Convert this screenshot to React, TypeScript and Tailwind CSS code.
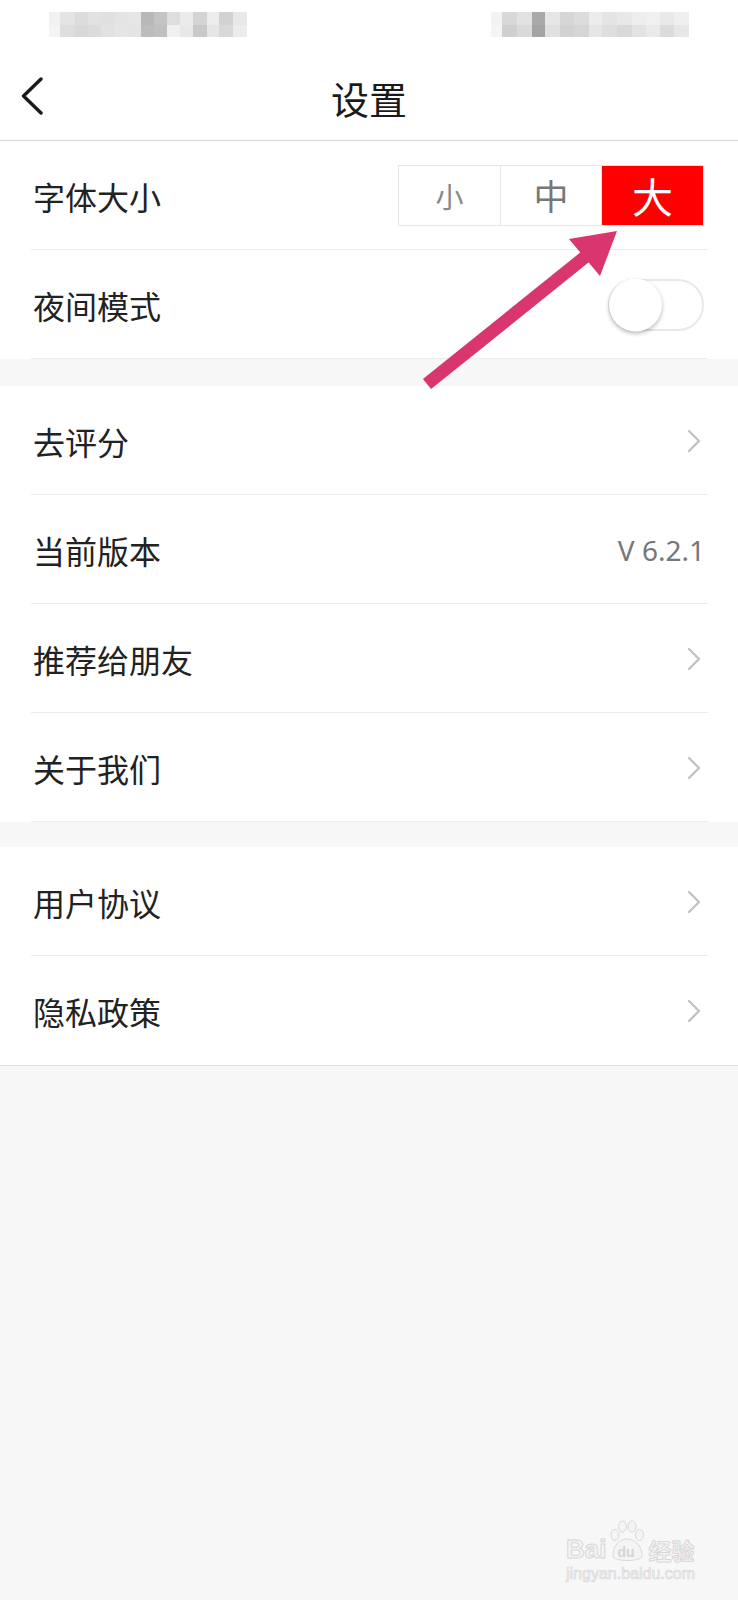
import { ReactNode } from 'react';

// 状态栏打码块（左、右）
const leftCells: [number, string, string][] = [
  [10, '#f1f1f1', '#f4f4f4'],
  [14, '#e4e4e4', '#dedede'],
  [13, '#dcdcdc', '#d8d8d8'],
  [12, '#e2e2e2', '#dcdcdc'],
  [13, '#e0e0e0', '#e2e2e2'],
  [12, '#e4e4e4', '#e6e6e6'],
  [12, '#e6e6e6', '#e4e4e4'],
  [13, '#b8b8b8', '#bcbcbc'],
  [12, '#c4c4c4', '#c0c0c0'],
  [12, '#dedede', '#f0f0f0'],
  [12, '#ebebeb', '#e8e8e8'],
  [13, '#d4d4d4', '#c8c8c8'],
  [12, '#ededed', '#e6e6e6'],
  [13, '#d2d2d2', '#d8d8d8'],
  [13, '#e8e8e8', '#ececec'],
];

const rightCells: [number, string, string][] = [
  [10, '#f3f3f3', '#f5f5f5'],
  [13, '#d8d8d8', '#cfcfcf'],
  [13, '#e2e2e2', '#dadada'],
  [12, '#a9a9a9', '#a4a4a4'],
  [13, '#e6e6e6', '#e0e0e0'],
  [13, '#d6d6d6', '#d2d2d2'],
  [13, '#dcdcdc', '#d6d6d6'],
  [12, '#ececec', '#e6e6e6'],
  [13, '#e4e4e4', '#dedede'],
  [13, '#e8e8e8', '#d9d9d9'],
  [13, '#eeeeee', '#e3e3e3'],
  [12, '#f0f0f0', '#eaeaea'],
  [13, '#e9e9e9', '#dcdcdc'],
  [13, '#efefef', '#e7e7e7'],
];

function Mosaic({ cells }: { cells: [number, string, string][] }) {
  return (
    <div className="flex w-[198px] blur-[0.6px]">
      {cells.map(([w, top, bottom], i) => (
        <div key={i} className="flex flex-col" style={{ flexGrow: w, flexBasis: 0 }}>
          <div className="h-[13px]" style={{ background: top }} />
          <div className="h-[12px]" style={{ background: bottom }} />
        </div>
      ))}
    </div>
  );
}

function Chevron() {
  return (
    <svg width="14" height="24" viewBox="0 0 14 24" fill="none">
      <path d="M2 2 L12 12 L2 22" stroke="#c2c2c2" strokeWidth="2.4" strokeLinecap="round" strokeLinejoin="round" />
    </svg>
  );
}

function Row({ label, right, last }: { label: string; right?: ReactNode; last?: boolean }) {
  return (
    <div className="relative h-[109px] flex items-center justify-between pl-[33px] pr-[37px] bg-white">
      <span className="text-[32px] text-[#222] leading-none">{label}</span>
      {right ?? <Chevron />}
      {!last && <div className="absolute bottom-0 left-[31px] right-[30px] h-px bg-[#ececec]" />}
    </div>
  );
}

function FontSizeSwitch() {
  return (
    <div className="flex h-[61px] border border-[#e6e6e6] mr-[-3px]">
      <div className="w-[102px] flex items-center justify-center border-r border-[#e6e6e6] text-[28px] text-[#888]">小</div>
      <div className="w-[101px] flex items-center justify-center border-r border-[#e6e6e6] text-[35px] text-[#777]">中</div>
      <div className="w-[101px] flex items-center justify-center bg-[#ff0000] text-[41px] text-white">大</div>
    </div>
  );
}

function Toggle() {
  return (
    <div className="relative w-[96px] h-[52px] rounded-full border-2 border-[#e8e8e8] bg-white mr-[-3px]">
      <div className="absolute left-[-1px] top-1/2 -translate-y-1/2 w-[53px] h-[53px] rounded-full bg-white shadow-[0_2px_4px_rgba(0,0,0,0.28)]" />
    </div>
  );
}

export default function App() {
  return (
    <div
      className="relative w-[738px] min-h-[1600px] bg-[#f7f7f7]"
      style={{ fontFamily: '"Noto Sans CJK SC", "Noto Sans", sans-serif' }}
    >
      {/* Status bar */}
      <div className="h-[55px] bg-white flex justify-between pt-[12px] pl-[49px] pr-[49px]">
        <Mosaic cells={leftCells} />
        <Mosaic cells={rightCells} />
      </div>

      {/* Nav */}
      <div className="relative h-[86px] bg-white border-b border-[#d6d6d6] flex items-center justify-center">
        <button className="absolute left-[20px] top-[22px]">
          <svg width="24" height="38" viewBox="0 0 24 38" fill="none">
            <path d="M21 2 L3.5 19 L21 36" stroke="#1a1a1a" strokeWidth="3.4" strokeLinecap="round" strokeLinejoin="round" />
          </svg>
        </button>
        <h1 className="text-[38px] text-[#1a1a1a] leading-none">设置</h1>
      </div>

      {/* Section 1 */}
      <div>
        <Row label="字体大小" right={<FontSizeSwitch />} />
        <Row label="夜间模式" right={<Toggle />} />
      </div>

      <div className="h-[27px]" />

      {/* Section 2 */}
      <div>
        <Row label="去评分" />
        <Row label="当前版本" right={<span className="text-[28px] text-[#777] leading-none mr-[-4px]" style={{ fontFamily: '"Noto Sans", sans-serif' }}>V 6.2.1</span>} />
        <Row label="推荐给朋友" />
        <Row label="关于我们" />
      </div>

      <div className="h-[25px]" />

      {/* Section 3 */}
      <div className="border-b border-[#dedede]">
        <Row label="用户协议" />
        <Row label="隐私政策" last />
      </div>

      {/* Annotation arrow */}
      <svg className="absolute left-0 top-0 pointer-events-none" width="738" height="400" viewBox="0 0 738 400">
        <line x1="427" y1="384" x2="590" y2="253" stroke="#d9356f" strokeWidth="13" />
        <polygon points="617,231 569,239 600,276" fill="#d9356f" />
      </svg>

      {/* Watermark */}
      <div className="absolute left-[566px] top-[1520px] flex flex-col items-start select-none">
        <div className="flex items-end">
          <span className="text-[26px] font-bold leading-none text-[#f4f4f4] [-webkit-text-stroke:1px_#d8d8d8]" style={{ fontFamily: '"Liberation Sans", sans-serif' }}>Bai</span>
          <div className="relative w-[40px] h-[42px] mx-[1px]">
            <svg width="40" height="42" viewBox="0 0 40 42" fill="none">
              <ellipse cx="8" cy="15" rx="4" ry="5.5" stroke="#d8d8d8" strokeWidth="1" fill="#f4f4f4" />
              <ellipse cx="15.5" cy="6.5" rx="4" ry="5.5" stroke="#d8d8d8" strokeWidth="1" fill="#f4f4f4" />
              <ellipse cx="25" cy="6.5" rx="4" ry="5.5" stroke="#d8d8d8" strokeWidth="1" fill="#f4f4f4" />
              <ellipse cx="32.5" cy="15" rx="4" ry="5.5" stroke="#d8d8d8" strokeWidth="1" fill="#f4f4f4" />
              <path d="M6 36 C6 25 13 19 20 19 C27 19 35 25 35 36 C35 42 6 42 6 36 Z" stroke="#d8d8d8" strokeWidth="1" fill="#f4f4f4" />
            </svg>
            <span className="absolute left-[10px] top-[25px] text-[14px] font-bold leading-none text-[#d4d4d4]" style={{ fontFamily: '"Liberation Sans", sans-serif' }}>du</span>
          </div>
          <span className="text-[23px] font-bold leading-none text-[#f4f4f4] [-webkit-text-stroke:1px_#d8d8d8]">经验</span>
        </div>
        <span className="mt-[4px] text-[16px] leading-none text-[#f4f4f4] [-webkit-text-stroke:0.7px_#d8d8d8]" style={{ fontFamily: '"Liberation Sans", sans-serif' }}>jingyan.baidu.com</span>
      </div>
    </div>
  );
}
